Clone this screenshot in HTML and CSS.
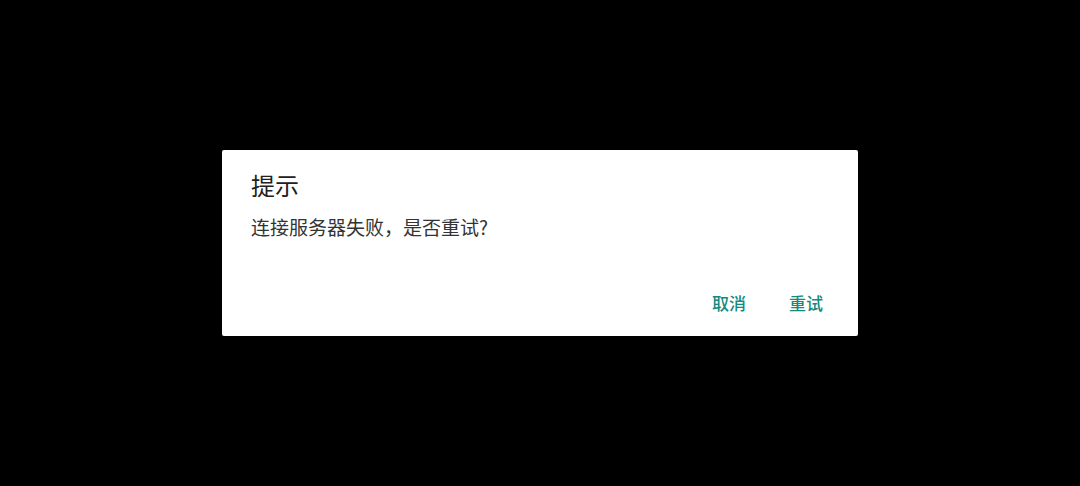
FILE: index.html
```html
<!DOCTYPE html>
<html lang="zh-CN">
<head>
<meta charset="utf-8">
<link rel="stylesheet" href="styles.css">
</head>
<body>
<div class="screen">
  <div class="dialog">
    <div class="title">提示</div>
    <div class="message">连接服务器失败，是否重试?</div>
    <div class="actions">
      <button class="btn">取消</button>
      <button class="btn">重试</button>
    </div>
  </div>
</div>
</body>
</html>
```

FILE: styles.css
```css
html, body {
  margin: 0;
  padding: 0;
  background: #000;
}
.screen {
  width: 1080px;
  height: 486px;
  display: flex;
  align-items: flex-start;
  justify-content: center;
  padding-top: 150px;
  box-sizing: border-box;
  font-family: "Noto Sans CJK SC", "Noto Sans", sans-serif;
}
.dialog {
  width: 636px;
  height: 186px;
  box-sizing: border-box;
  background: #fff;
  border-radius: 2px;
  padding: 19px 19px 0 29px;
  display: flex;
  flex-direction: column;
}
.title {
  font-size: 24px;
  line-height: 32px;
  color: #212121;
}
.message {
  margin-top: 12px;
  font-size: 19px;
  line-height: 28px;
  color: #333;
}
.actions {
  margin-top: 44px;
  display: flex;
  justify-content: flex-end;
  gap: 11px;
}
.btn {
  font-family: "Noto Sans CJK SC", "Noto Sans", sans-serif;
  font-size: 17px;
  font-weight: 500;
  line-height: 36px;
  height: 36px;
  padding: 0 16px;
  border: none;
  background: transparent;
  color: #138a7e;
}
```
